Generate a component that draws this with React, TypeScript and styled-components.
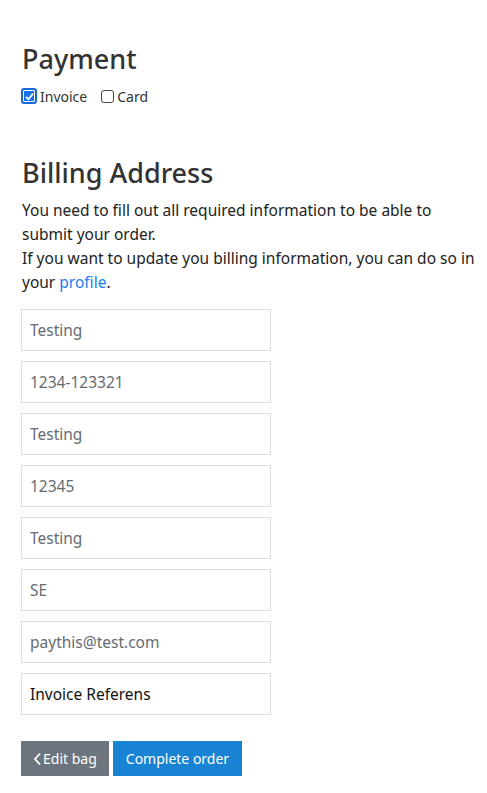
import React from "react"
import styled, { createGlobalStyle } from "styled-components"

const GlobalStyle = createGlobalStyle`
  html, body {
    margin: 0;
    padding: 0;
    background: #fff;
  }
  body {
    font-family: "Noto Sans", "DejaVu Sans", sans-serif;
    color: #212529;
  }
  * {
    box-sizing: border-box;
  }
`

const fields = [
  { value: "Testing" },
  { value: "1234-123321" },
  { value: "Testing" },
  { value: "12345" },
  { value: "Testing" },
  { value: "SE" },
  { value: "paythis@test.com" },
  { placeholder: "Invoice Referens" },
]

const App: React.FC = () => {
  return (
    <Page>
      <GlobalStyle />
      <Title>Payment</Title>
      <Options>
        <Option>
          <Check checked />
          Invoice
        </Option>
        <Option>
          <Check />
          Card
        </Option>
      </Options>

      <Title $billing>Billing Address</Title>
      <Info>
        You need to fill out all required information to be able to submit your order.
        <br />
        If you want to update you billing information, you can do so in your{" "}
        <a href="#">profile</a>.
      </Info>

      <Form>
        {fields.map((f, i) => (
          <Field key={i} defaultValue={f.value} placeholder={f.placeholder} />
        ))}
      </Form>

      <Actions>
        <Button $variant="secondary">
          <svg width="9" height="14" viewBox="0 0 9 14">
            <path d="M7 1.5 L2 7 L7 12.5" fill="none" stroke="#fff" strokeWidth="1.8" />
          </svg>
          Edit bag
        </Button>
        <Button $variant="primary">Complete order</Button>
      </Actions>
    </Page>
  )
}

const Check: React.FC<{ checked?: boolean }> = ({ checked }) => (
  <CheckBox $checked={checked}>
    {checked && (
      <svg width="11" height="11" viewBox="0 0 11 11">
        <path d="M2 5.8 L4.4 8.2 L9 2.6" fill="none" stroke="#fff" strokeWidth="1.8" />
      </svg>
    )}
  </CheckBox>
)

const Page = styled.div`
  padding: 42px 12px 30px 21px;
  width: 487px;
`

const Title = styled.h2<{ $billing?: boolean }>`
  margin: ${p => (p.$billing ? "50px 0 8px 1px" : "0 0 10px 1px")};
  font-size: 27px;
  font-weight: 500;
  color: #333;
  line-height: 34px;
`

const Options = styled.div`
  display: flex;
  align-items: center;
  gap: 14px;
  font-size: 14px;
  height: 20px;
`

const Option = styled.label`
  display: flex;
  align-items: center;
  gap: 2px;
  color: #333;
`

const CheckBox = styled.span<{ $checked?: boolean }>`
  display: inline-flex;
  align-items: center;
  justify-content: center;
  width: ${p => (p.$checked ? "16px" : "13px")};
  height: ${p => (p.$checked ? "16px" : "13px")};
  border-radius: 3px;
  border: ${p => (p.$checked ? "2px solid #1a66d6" : "1px solid #444")};
  background: ${p => (p.$checked ? "#1a73e8" : "#fff")};
  box-shadow: ${p => (p.$checked ? "inset 0 0 0 1px #fff" : "none")};
  margin-right: 1px;
`

const Info = styled.p`
  margin: 0 0 15px 1px;
  font-size: 15.5px;
  line-height: 24px;
  color: #222;

  a {
    color: #1a7ef0;
    text-decoration: none;
  }
`

const Form = styled.div`
  display: flex;
  flex-direction: column;
  gap: 10px;
`

const Field = styled.input`
  width: 250px;
  height: 42px;
  border: 1px solid #dcdcdc;
  padding: 0 8px;
  font-family: inherit;
  font-size: 15.5px;
  color: #666b70;
  outline: none;

  &::placeholder {
    color: #111;
  }
`

const Actions = styled.div`
  display: flex;
  gap: 4px;
  margin-top: 26px;
`

const Button = styled.button<{ $variant: "primary" | "secondary" }>`
  display: flex;
  align-items: center;
  gap: 1px;
  height: 35px;
  border: none;
  padding: ${p => (p.$variant === "primary" ? "0 13px" : "0 12px")};
  font-family: inherit;
  font-size: 14px;
  color: #fff;
  background: ${p => (p.$variant === "primary" ? "#1783d2" : "#6c757d")};
`

export default App
